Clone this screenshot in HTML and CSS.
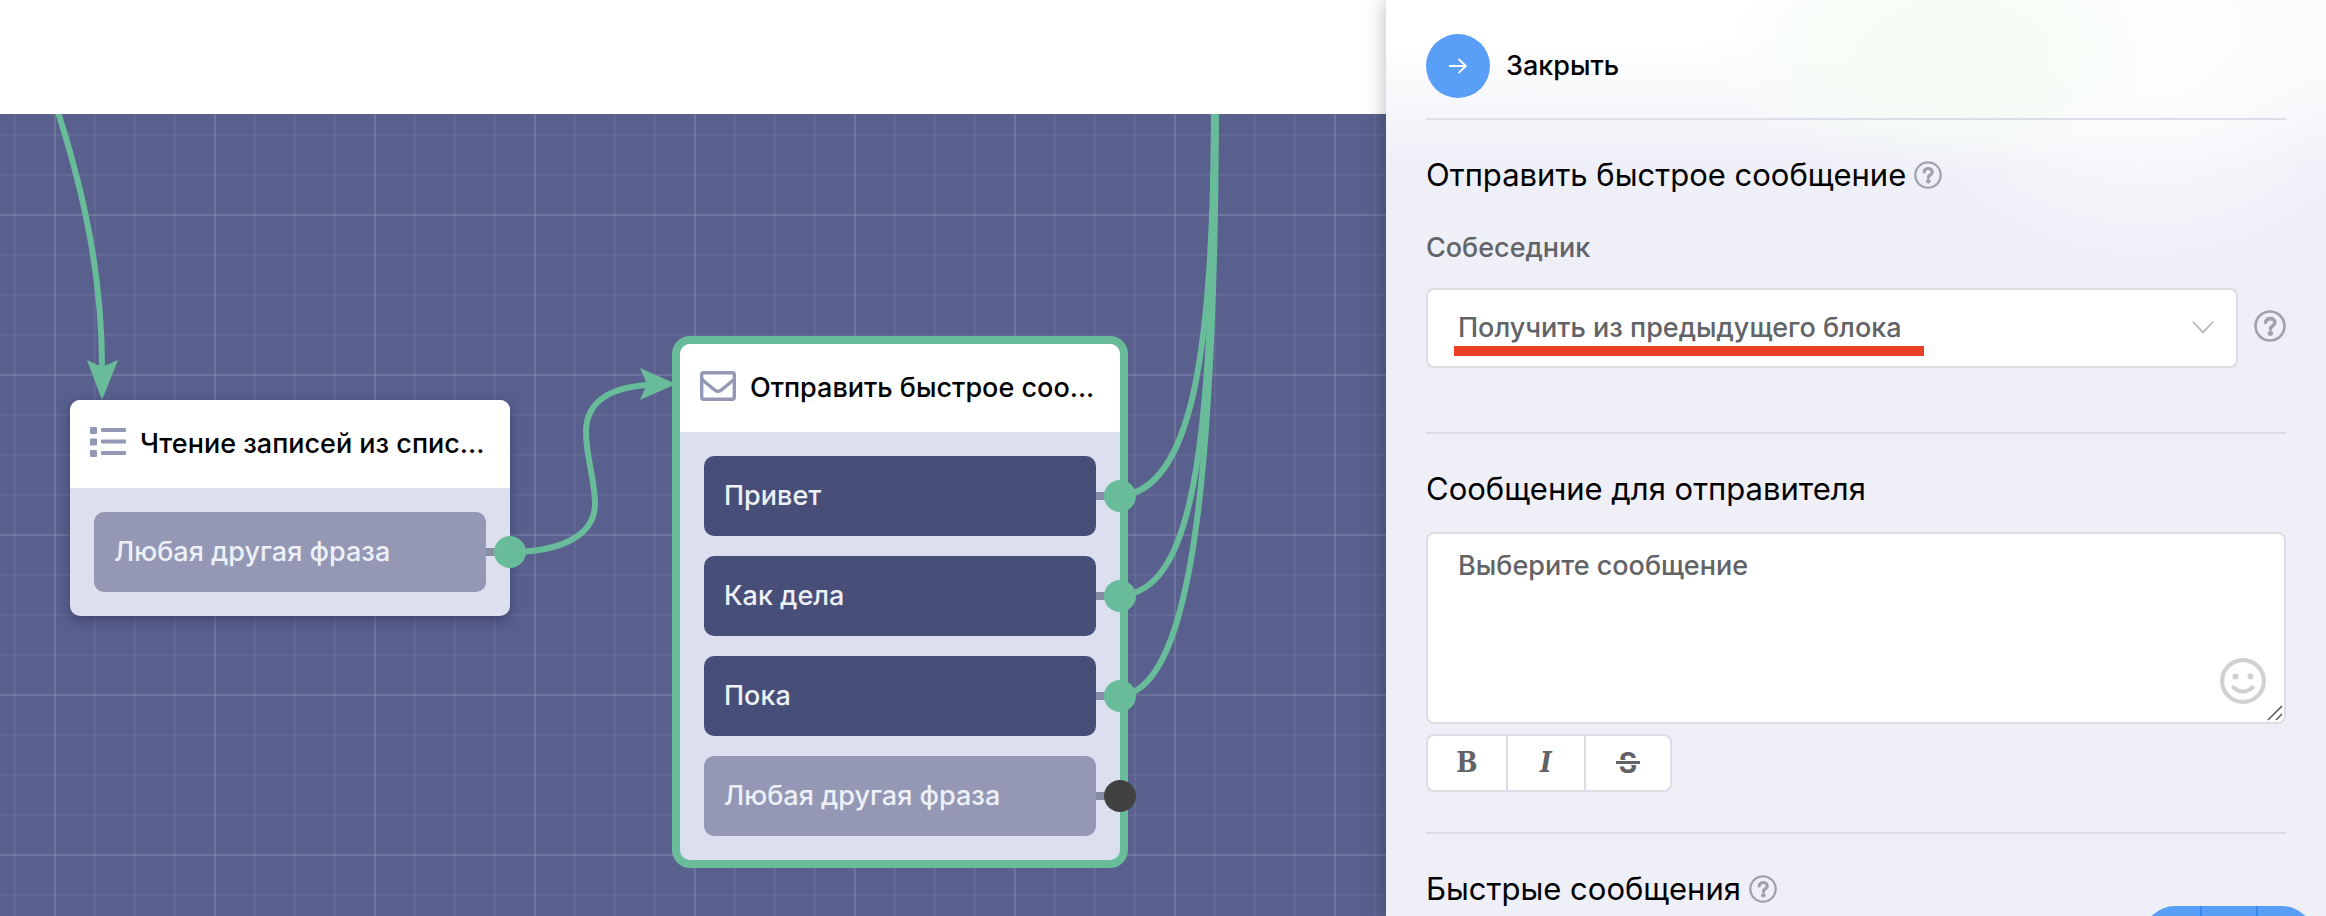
FILE: index.html
```html
<!DOCTYPE html>
<html lang="ru">
<head>
<meta charset="utf-8">
<meta name="viewport" content="width=device-width, initial-scale=1">
<title>Отправить быстрое сообщение</title>
<link rel="stylesheet" href="styles.css">
</head>
<body>
<svg class="sprite" aria-hidden="true">
  <symbol id="help" viewBox="0 0 32 32">
    <circle cx="16" cy="16" r="14.5" fill="none" stroke="currentColor" stroke-width="2.6"/>
    <path d="M11.6 12.4C12.2 9.8 14 8.6 16.3 8.6c2.6 0 4.6 1.5 4.6 3.9 0 3.4-4.4 3.3-4.4 6.3" fill="none" stroke="currentColor" stroke-width="3.6" stroke-linecap="round"/>
    <circle cx="16.4" cy="23.2" r="2.6" fill="currentColor"/>
  </symbol>
</svg>
<div class="app">
  <main class="workspace">
    <header class="topbar"></header>
    <section class="canvas">
      <svg class="links" aria-hidden="true">
        <g class="link">
          <path d="M58 -2C86 86 102 166 102 254"/>
          <path d="M510 438C560 438 596 422 595 388C594 362 586 342 586 318C586 284 616 273 648 271"/>
          <path d="M1120 382C1190 376 1214 246 1214 -10"/>
          <path d="M1120 482C1190 476 1214 356 1214 -10"/>
          <path d="M1120 582C1185 576 1215 406 1216 -10"/>
        </g>
        <path class="arrow" d="M102 286L87 246L102 253L118 246Z"/>
        <path class="arrow" d="M676 270L640 254L647 270L640 286Z"/>
      </svg>
      <article class="node node-read">
        <h3 class="node-title">
          <svg class="node-icon" viewBox="0 0 36 30" aria-hidden="true"><path fill="currentColor" d="M1 0h5q1 0 1 1v5q0 1-1 1H1q-1 0-1-1V1q0-1 1-1zM1 11.500h5q1 0 1 1v5q0 1-1 1H1q-1 0-1-1v-5q0-1 1-1zM1 23h5q1 0 1 1v5q0 1-1 1H1q-1 0-1-1v-5q0-1 1-1zM12 1h23q1 0 1 1v2q0 1-1 1H12q-1 0-1-1V2q0-1 1-1zM12 12.500h23q1 0 1 1v2q0 1-1 1H12q-1 0-1-1v-2q0-1 1-1zM12 24h23q1 0 1 1v2q0 1-1 1H12q-1 0-1-1v-2q0-1 1-1z"/></svg>
          <span>Чтение записей из спис...</span>
        </h3>
        <ul class="options">
          <li class="option muted linked">Любая другая фраза</li>
        </ul>
      </article>
      <article class="node node-send selected">
        <h3 class="node-title">
          <svg class="node-icon" viewBox="0 0 36 30" aria-hidden="true"><g fill="none" stroke="currentColor" stroke-width="3.400"><rect x="1.700" y="1.700" width="32.600" height="26.600" rx="2"/><path d="M2 8.500L14 18.500Q18 22 22 18.500L34 8.500"/></g></svg>
          <span>Отправить быстрое соо...</span>
        </h3>
        <ul class="options">
          <li class="option linked">Привет</li>
          <li class="option linked">Как дела</li>
          <li class="option linked">Пока</li>
          <li class="option muted">Любая другая фраза</li>
        </ul>
      </article>
    </section>
  </main>
  <aside class="panel">
    <button class="close" type="button">
      <span class="close-circle"><svg viewBox="0 0 18 16" width="18" height="16" aria-hidden="true"><path d="M0 8h17M9.500 1L17 8l-7.500 7" fill="none" stroke="#fff" stroke-width="1.800"/></svg></span>
      Закрыть
    </button>
    <section class="block block-contact">
      <h2 class="heading">Отправить быстрое сообщение <svg class="help"><use href="#help"/></svg></h2>
      <label class="label" for="contact">Собеседник</label>
      <div class="field-row">
        <div class="select-wrap">
          <select id="contact"><option>Получить из предыдущего блока</option></select>
          <svg class="chevron" viewBox="0 0 20 12" aria-hidden="true"><path d="M.7.700L10 10.500L19.300.700" fill="none" stroke="#b5b5bd" stroke-width="1.600"/></svg>
          <span class="marker"></span>
        </div>
        <svg class="help help-large"><use href="#help"/></svg>
      </div>
    </section>
    <section class="block block-message">
      <h2 class="heading"><label for="message">Сообщение для отправителя</label></h2>
      <div class="message-wrap">
        <textarea id="message" placeholder="Выберите сообщение"></textarea>
        <button class="emoji" type="button" aria-label="Эмодзи"><svg viewBox="0 0 46 46" aria-hidden="true"><g fill="none" stroke="#d0d1d3" stroke-width="4.200"><circle cx="23" cy="23" r="20.900"/><path d="M13.500 29.500Q23 37.500 32.500 29.500" stroke-linecap="round"/></g><g fill="#d0d1d3"><circle cx="15.500" cy="18.500" r="3"/><circle cx="30.500" cy="18.500" r="3"/></g></svg></button>
        <svg class="grip" viewBox="0 0 16 16" aria-hidden="true"><path d="M1 15L15 1M9 15l6-6" stroke="#555" stroke-width="1.500"/></svg>
      </div>
      <div class="format">
        <button type="button" class="bold">B</button>
        <button type="button" class="italic">I</button>
        <button type="button" class="strike">S</button>
      </div>
    </section>
    <section class="block block-quick">
      <h2 class="heading">Быстрые сообщения <svg class="help"><use href="#help"/></svg></h2>
    </section>
    <div class="dock">
      <button type="button" aria-label="Уменьшить"></button>
      <button type="button" aria-label="По центру"></button>
      <button type="button" aria-label="Увеличить"></button>
    </div>
  </aside>
</div>
</body>
</html>
```

FILE: styles.css
```css
* { box-sizing: border-box; }

body {
  margin: 0;
  overflow: hidden;
  font-family: Inter, "Noto Sans", sans-serif;
  font-size: 27px;
  font-weight: 450;
  line-height: 36px;
  color: #000;
}

h2, h3, ul { margin: 0; padding: 0; }
h2 { font-weight: 400; }
h3 { font-weight: 450; }
button, select, textarea { font: inherit; color: inherit; }
.sprite { position: absolute; width: 0; height: 0; }

.app { display: flex; height: 100vh; overflow: hidden; }
.workspace { flex: 1; min-width: 0; display: flex; flex-direction: column; }
.topbar { height: 114px; background: #fff; }

.canvas {
  position: relative;
  flex: 1;
  overflow: hidden;
  background-color: #59608d;
  background-image:
    linear-gradient(90deg, rgba(255, 255, 255, .08) 2px, transparent 2px),
    linear-gradient(rgba(255, 255, 255, .08) 2px, transparent 2px),
    linear-gradient(90deg, rgba(255, 255, 255, .05) 2px, transparent 2px),
    linear-gradient(rgba(255, 255, 255, .05) 2px, transparent 2px);
  background-size: 160px 160px, 160px 160px, 40px 40px, 40px 40px;
  background-position: 54px 100px, 54px 100px, 14px 20px, 14px 20px;
}

.links { position: absolute; inset: 0; width: 100%; height: 100%; }
.link path { fill: none; stroke: #68bc9a; stroke-width: 6px; }
.arrow { fill: #68bc9a; }

.node {
  position: absolute;
  width: 440px;
  border-radius: 10px;
  background: #dcdfee;
  box-shadow: 0 4px 12px rgba(30, 34, 70, .45);
}
.node-read { left: 70px; top: 286px; }
.node-send { left: 680px; top: 230px; }
.selected { box-shadow: 0 0 0 8px #68bc9a; }

.node-title {
  display: flex;
  align-items: center;
  gap: 14px;
  height: 88px;
  padding: 0 20px;
  border-radius: 10px 10px 0 0;
  background: #fff;
  font-size: 27px;
  white-space: nowrap;
}
.node-icon { flex: none; width: 36px; height: 30px; margin-bottom: 4px; color: #9498b5; }

.options {
  display: grid;
  gap: 20px;
  padding: 24px;
  list-style: none;
}
.option {
  position: relative;
  height: 80px;
  padding: 0 20px;
  border-radius: 10px;
  background: #474e78;
  color: #edf0f7;
  font-weight: 500;
  line-height: 80px;
}
.muted { background: #9498b5; }
.option::before {
  content: "";
  position: absolute;
  left: 100%;
  top: 36px;
  width: 24px;
  height: 8px;
  background: #868ca4;
}
.option::after {
  content: "";
  position: absolute;
  right: -40px;
  top: 24px;
  width: 32px;
  height: 32px;
  border-radius: 50%;
  background: #414141;
}
.linked::after { background: #68bc9a; }

.panel {
  position: relative;
  width: 940px;
  height: 100%;
  padding: 32px 40px 0;
  overflow: hidden;
  background:
    radial-gradient(ellipse 250px 130px at 560px 50px, rgba(244, 252, 244, 1) 0%, rgba(245, 252, 245, .8) 50%, rgba(247, 252, 247, .25) 80%, transparent 100%),
    radial-gradient(ellipse 270px 230px at 760px 40px, #fff 0%, rgba(252, 252, 254, .85) 40%, rgba(248, 248, 251, .4) 75%, transparent 100%),
    linear-gradient(#fff 40px, #fbfbfd 75px, #eeeff7 170px);
  box-shadow: 0 0 20px rgba(0, 0, 0, .28);
}

.close {
  display: flex;
  align-items: center;
  gap: 16px;
  padding: 2px 0 0;
  border: 0;
  background: none;
}
.close-circle {
  display: grid;
  place-items: center;
  width: 64px;
  height: 64px;
  border-radius: 50%;
  background: #599ff7;
}

.block { border-top: 2px solid #dcdee9; padding-top: 35px; }
.block-contact { height: 314px; margin-top: 20px; }
.block-message { height: 400px; }
.heading {
  display: flex;
  align-items: center;
  gap: 8px;
  font-size: 31px;
  line-height: 40px;
}
.help { width: 28px; height: 28px; color: #a1a1ac; }
.help-large { width: 32px; height: 32px; margin-bottom: 4px; }

.label { display: block; margin-top: 35px; color: #626367; }
.field-row { display: flex; align-items: center; gap: 16px; margin-top: 22px; }
.select-wrap { position: relative; flex: 1; height: 80px; }
select, textarea {
  display: block;
  width: 100%;
  height: 100%;
  border: 2px solid #dddee5;
  border-radius: 8px;
  background: #fff;
  color: #626367;
  outline: 0;
}
select { appearance: none; padding: 0 30px; }
.chevron { position: absolute; right: 24px; top: 33px; width: 22px; height: 13px; }
.marker { position: absolute; left: 28px; top: 58px; width: 470px; height: 10px; background: #ea3f26; }

.message-wrap { position: relative; height: 192px; margin-top: 23px; }
textarea { padding: 14px 30px; resize: none; }
textarea::placeholder { color: #626367; opacity: 1; }
.emoji { position: absolute; right: 20px; bottom: 20px; width: 46px; height: 46px; padding: 0; border: 0; background: none; }
.emoji svg { display: block; }
.grip { position: absolute; right: 3px; bottom: 3px; width: 16px; height: 16px; }

.format {
  display: inline-flex;
  height: 58px;
  margin-top: 10px;
  border: 2px solid #dddee5;
  border-radius: 8px;
  background: #fff;
}
.format button {
  width: 78px;
  padding: 0;
  border: 0;
  background: none;
  font-family: "DejaVu Serif Condensed", "DejaVu Serif", serif;
  font-size: 28px;
  font-weight: 700;
  color: #626367;
}
.format button + button { border-left: 2px solid #dddee5; }
.format .italic { font-style: italic; }
.format .strike { position: relative; width: 86px; font-family: Inter, sans-serif; }
.strike::after {
  content: "";
  position: absolute;
  left: 30px;
  top: 25px;
  width: 24px;
  height: 3px;
  background: #626367;
  box-shadow: 0 0 0 1px #fff;
}

.dock {
  position: absolute;
  right: 12px;
  bottom: -54px;
  display: flex;
  height: 64px;
  border-radius: 32px;
  overflow: hidden;
}
.dock button { width: 57px; border: 0; background: #599ff7; }
.dock button + button { width: 56px; border-left: 2px solid #3c86f2; }
.dock button:last-child { width: 58px; }
```
